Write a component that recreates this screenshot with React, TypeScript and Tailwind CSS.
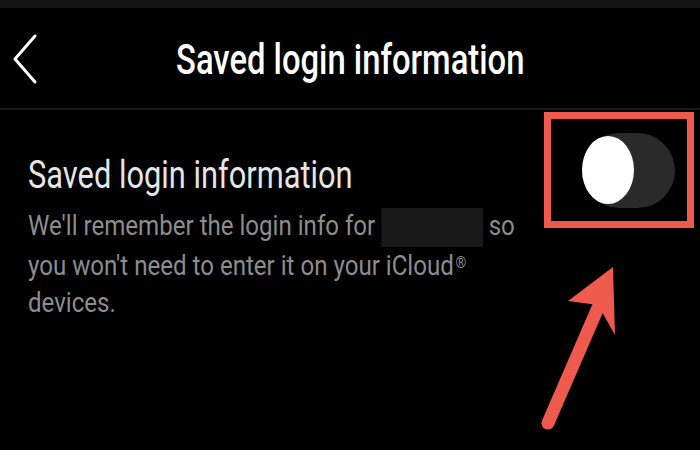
function Toggle() {
  return (
    <div className="shrink-0 border-[7px] border-[#ef5a4e] w-[150px] h-[116px] flex items-center pl-[31px]">
      <div className="w-[93px] h-[75px] rounded-full bg-[#2a2a2a] flex items-center">
        <div className="w-[52px] h-[68px] rounded-[50%] bg-white" />
      </div>
    </div>
  );
}

function Arrow() {
  return (
    <svg width="100" height="190" viewBox="0 0 100 190" className="absolute left-[530px] top-[255px]">
      <path d="M18 168 L70 48" stroke="#ef5a4e" strokeWidth="13" strokeLinecap="round" fill="none" />
      <path d="M83 12 L38 46 L68 50 L85 80 Z" fill="#ef5a4e" />
    </svg>
  );
}

export default function App() {
  return (
    <div
      className="relative w-[700px] h-[450px] bg-black overflow-hidden"
      style={{ fontFamily: "Roboto, 'Liberation Sans', sans-serif" }}
    >
      <div className="h-[8px] bg-[#141414]" />
      <div className="relative h-[102px] flex items-center justify-center pt-[4px] border-b-2 border-[#171717]">
        <svg width="30" height="56" viewBox="0 0 30 56" className="absolute left-[10px] top-[23px]">
          <path d="M25 5 L5 28 L25 51" stroke="white" strokeWidth="3" strokeLinecap="round" strokeLinejoin="round" fill="none" />
        </svg>
        <div className="text-white text-[42px] leading-[50px] font-medium whitespace-nowrap scale-x-[0.78]">
          Saved login information
        </div>
      </div>
      <div className="flex justify-between pl-[28px] pr-[6px] pt-[2px]">
        <div className="flex-1 min-w-0 pt-[40px]">
          <div className="text-[#e6e6e6] text-[39px] leading-[46px] whitespace-nowrap scale-x-[0.79] origin-left">
            Saved login information
          </div>
          <div className="text-[#8d8d8d] text-[28px] leading-[37px] whitespace-nowrap scale-x-[0.86] origin-left mt-[9px]">
            We'll remember the login info for{" "}
            <span className="inline-block w-[118px] h-[39px] bg-[#191919] align-middle" /> so
            <br />
            you won't need to enter it on your iCloud
            <sup className="text-[16px] relative top-[-7px] ml-[2px]">®</sup>
            <br />
            devices.
          </div>
        </div>
        <Toggle />
      </div>
      <Arrow />
    </div>
  );
}
